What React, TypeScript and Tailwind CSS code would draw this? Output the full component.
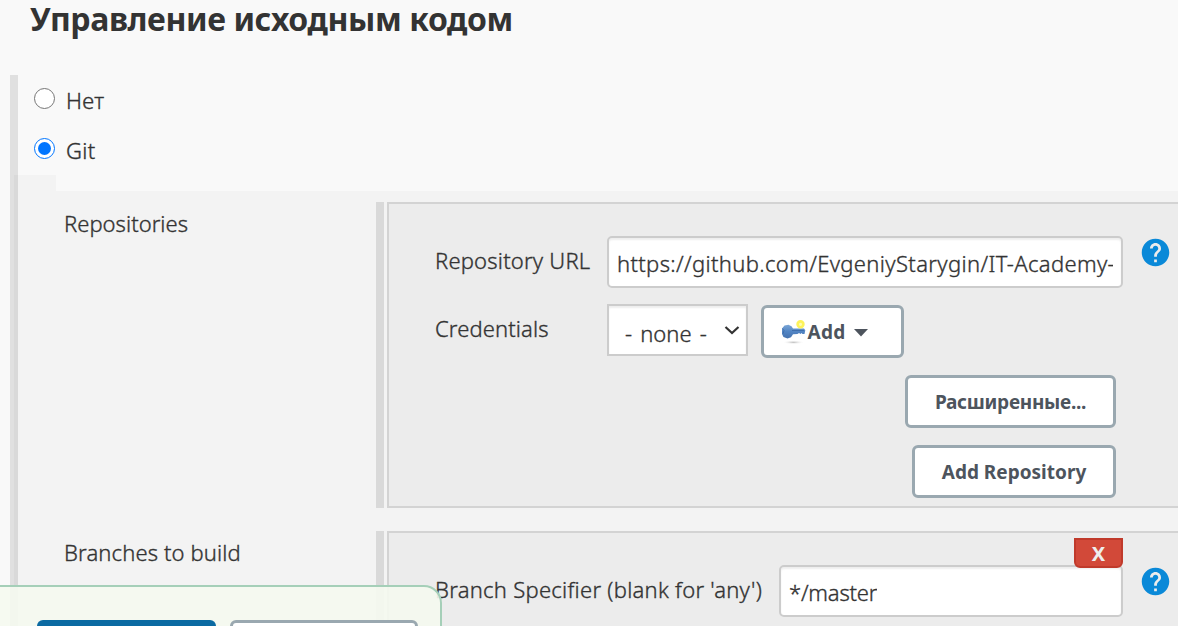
import type { ReactNode } from "react";
import { MdHelp } from "react-icons/md";

function Radio({ label, checked = false }: { label: string; checked?: boolean }) {
  return (
    <label className="flex h-[50px] items-start pl-4">
      <span
        className={
          checked
            ? "mt-[13px] flex size-[21px] items-center justify-center rounded-full border border-[#0075ff] bg-white"
            : "mt-[13px] flex size-[21px] items-center justify-center rounded-full border border-[#767676] bg-white"
        }
      >
        {checked && <span className="size-[13px] rounded-full bg-[#0075ff]" />}
      </span>
      <span className="mt-[10px] ml-[11px] leading-[30px] tracking-[0.3px]">{label}</span>
    </label>
  );
}

function Help() {
  return <MdHelp className="size-[33px] shrink-0 text-[#0a89d8]" />;
}

function Field({ value, className }: { value: string; className: string }) {
  return (
    <div
      className={`flex h-[52px] shrink-0 items-center rounded-[5px] border-2 border-[#ccc] bg-white px-2 pt-[3px] whitespace-nowrap shadow-[inset_0_2px_2px_rgba(0,0,0,0.07)] ${className}`}
    >
      <span className="min-w-0 overflow-hidden">{value}</span>
    </div>
  );
}

function Button({ children, className }: { children: ReactNode; className: string }) {
  return (
    <button
      className={`flex h-[53px] shrink-0 items-center justify-center rounded-[6px] border-3 border-[#9aa8b0] bg-white pt-[2px] text-[19px] font-bold whitespace-nowrap text-[#4d545d] [-webkit-text-stroke:0] ${className}`}
    >
      {children}
    </button>
  );
}

function KeyIcon() {
  return (
    <svg width="25" height="25" viewBox="0 0 25 25" className="shrink-0">
      <defs>
        <linearGradient id="key" x1="0" y1="0" x2="0" y2="1">
          <stop offset="0" stopColor="#7ba6d6" />
          <stop offset="0.5" stopColor="#5285c4" />
          <stop offset="1" stopColor="#4672ae" />
        </linearGradient>
        <radialGradient id="shade">
          <stop offset="0" stopColor="#bbb" />
          <stop offset="1" stopColor="#fff" stopOpacity="0" />
        </radialGradient>
      </defs>
      <ellipse cx="12.5" cy="22.3" rx="11" ry="2" fill="url(#shade)" />
      <path
        d="M1 8.500 3.500 5.500 7.500 4.700 10.500 6.300 12 8.500h11l1.300 1.700-.8 3.800h-2l-1-1-1 1-1.500-1-1.500 1-4.500.2-2 3-3.500 1.200-4-1.400-1.500-3Z"
        fill="url(#key)"
      />
      <path d="M1.500 8.500 3 10.500l-.8 3" stroke="#3a659f" strokeOpacity=".7" fill="none" />
      <path d="M11 10.500h12" stroke="#3f6eac" />
      <circle cx="19.500" cy="4.300" r="2.900" fill="#fffbb0" stroke="#fdf35a" strokeWidth="2.600" />
    </svg>
  );
}

function Panel({
  label,
  labelClass,
  className,
  children,
}: {
  label: string;
  labelClass: string;
  className: string;
  children: ReactNode;
}) {
  return (
    <div className={`flex shrink-0 ${className}`}>
      <div className={`w-[320px] shrink-0 pt-[6px] pl-2 leading-[30px] ${labelClass}`}>{label}</div>
      <div className="mr-[3px] w-2 shrink-0 bg-[#d9d9d9]" />
      <div className="flex flex-1 flex-col border-2 border-r-0 border-[#d3d3d3] bg-[#ececec] pl-[46px]">
        {children}
      </div>
    </div>
  );
}

export default function App() {
  return (
    <div className="relative flex h-[626px] w-[1178px] flex-col overflow-hidden bg-[#f9f9f9] font-['Noto_Sans',sans-serif] text-[22px] font-light text-[#333] [-webkit-text-stroke:0.35px_#333]">
      <h1 className="h-[75px] shrink-0 pl-[30px] text-[32px] leading-[38px] font-bold tracking-[-0.4px] whitespace-nowrap [-webkit-text-stroke:0]">
        Управление исходным кодом
      </h1>
      <div className="ml-[10px] shrink-0 border-l-8 border-[#e0e0e0]">
        <Radio label="Нет" />
        <Radio label="Git" checked />
      </div>
      <div className="ml-[10px] flex shrink-0">
        <div className="w-1 bg-[#e0e0e0]" />
        <div className="w-1 bg-[#d9d9d9]" />
        <div className="w-[38px] bg-[#f3f3f3]" />
        <div className="mt-4 flex flex-1 flex-col gap-[23px] bg-[#f3f3f3] pt-[11px]">
          <Panel label="Repositories" labelClass="tracking-[0.03px]" className="h-[306px]">
            <div className="mt-8 flex items-start">
              <div className="w-[172px] pt-[9px] leading-[30px] tracking-[0.2px]">Repository URL</div>
              <Field value="https://github.com/EvgeniyStarygin/IT-Academy-" className="w-[516px] tracking-[0.35px]" />
              <div className="ml-4">
                <Help />
              </div>
            </div>
            <div className="mt-4 flex items-start">
              <div className="w-[172px] pt-[9px] leading-[30px] tracking-[0.12px]">Credentials</div>
              <div className="flex h-[52px] w-[141px] items-center justify-between border-2 border-[#ccc] bg-white pr-[5px] pl-4 whitespace-nowrap shadow-[inset_0_2px_2px_rgba(0,0,0,0.07)]">
                <span className="pt-[6px] [word-spacing:2.4px]">- none -</span>
                <svg width="18" height="12" viewBox="0 0 18 12" className="-ml-2 shrink-0">
                  <path d="m2.500 3 6.500 6 6.500-6" fill="none" stroke="#333" strokeWidth="2.200" />
                </svg>
              </div>
              <Button className="mt-px ml-[13px] w-[143px] pr-[16px]">
                <KeyIcon />
                <span className="ml-px tracking-[0.3px]">Add</span>
                <svg width="14" height="8" viewBox="0 0 14 8" className="ml-[8px]">
                  <path d="M0 0h14L7 7.500Z" fill="#4d545d" />
                </svg>
              </Button>
            </div>
            <div className="mt-[17px] flex flex-col items-end gap-[17px] pr-[62px]">
              <Button className="w-[211px] tracking-[-0.27px]">Расширенные...</Button>
              <Button className="w-[204px]">Add Repository</Button>
            </div>
          </Panel>
          <Panel label="Branches to build" labelClass="tracking-[0.13px]" className="h-[110px]">
            <div className="mt-8 flex items-start">
              <div className="w-[344px] pt-[9px] leading-[30px] tracking-[0.27px] whitespace-nowrap">
                Branch Specifier (blank for 'any')
              </div>
              <div className="relative">
                <Field value="*/master" className="w-[344px] tracking-[-0.2px]" />
                <button className="absolute -top-[27px] right-0 flex h-[30px] w-[49px] items-center justify-center rounded-b-[6px] border-2 border-[#c03a2b] bg-[#d24939] pt-[2px] text-[20px] font-bold text-[#eee] [-webkit-text-stroke:0]">
                  X
                </button>
              </div>
              <div className="ml-4">
                <Help />
              </div>
            </div>
          </Panel>
        </div>
      </div>
      <div className="absolute top-[585px] left-0 flex h-[80px] w-[442px] gap-[14px] rounded-tr-[18px] border-t-2 border-r-2 border-[#a5cfb8] bg-[#f5f9ef]/90 pt-[33px] pl-[37px]">
        <div className="h-[53px] w-[179px] rounded-[6px] bg-[#0b6aa2]" />
        <div className="h-[53px] w-[188px] rounded-[6px] border-3 border-[#9aa8b0] bg-white" />
      </div>
    </div>
  );
}
